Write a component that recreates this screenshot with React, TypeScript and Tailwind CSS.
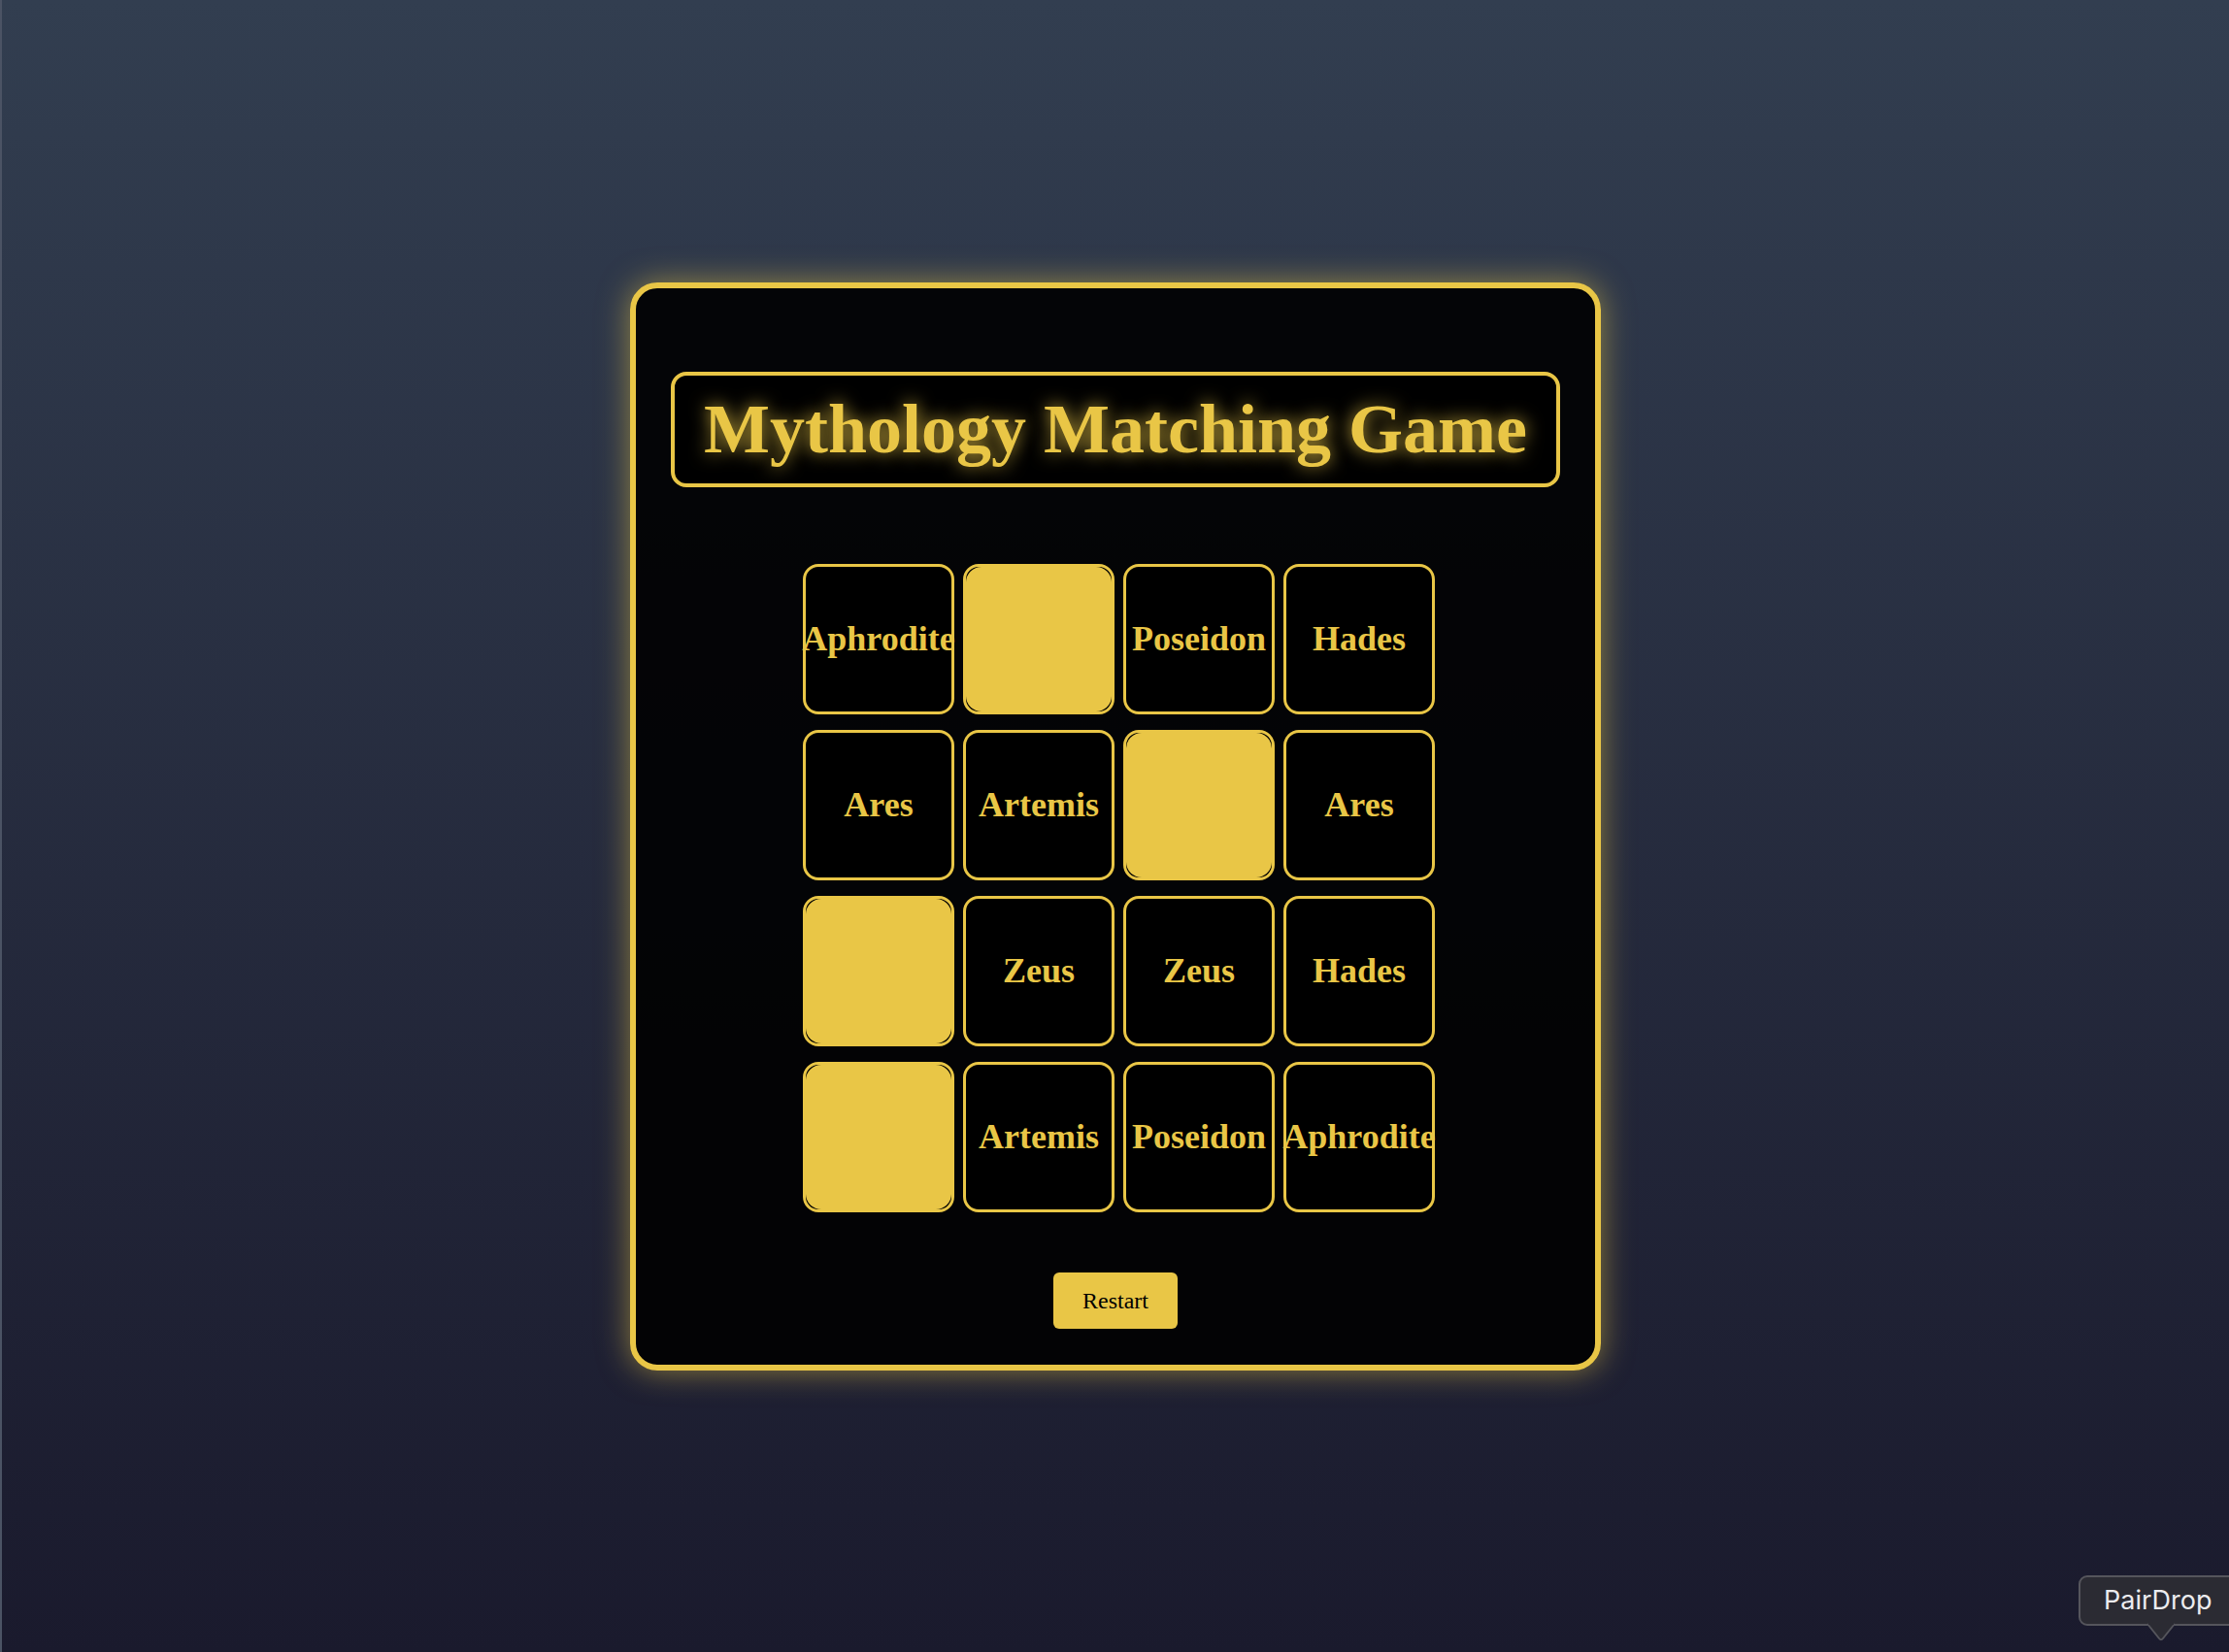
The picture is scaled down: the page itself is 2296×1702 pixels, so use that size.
import { useState } from "react";

const deck = [
  "Aphrodite", "Athena", "Poseidon", "Hades",
  "Ares", "Artemis", "Athena", "Ares",
  "Apollo", "Zeus", "Zeus", "Hades",
  "Apollo", "Artemis", "Poseidon", "Aphrodite",
];

// indices shown face down (yellow back)
const hiddenAtStart = [1, 6, 8, 12];

function Card({ name, hidden, onClick }: { name: string; hidden: boolean; onClick: () => void }) {
  return (
    <button
      onClick={onClick}
      className="w-[156px] h-[155px] rounded-[16px] border-[3px] border-[#e9c646] bg-black flex items-center justify-center relative"
    >
      {hidden ? (
        <div className="absolute inset-0 rounded-[16px] bg-[#e9c646]" />
      ) : (
        <span className="text-[36px] font-bold text-[#e9c646] whitespace-nowrap leading-none [font-family:'Liberation_Serif',serif]">
          {name}
        </span>
      )}
    </button>
  );
}

export default function App() {
  const [hidden, setHidden] = useState<number[]>(hiddenAtStart);

  return (
    <div className="w-[2296px] h-[1702px] relative overflow-hidden bg-linear-to-b from-[#323e50] to-[#1a1a2d] border-l-2 border-[#4b5364] flex items-center justify-center [font-family:'Liberation_Serif',serif]">
      {/* Game panel */}
      <div className="w-[1000px] rounded-[28px] border-[6px] border-[#e9c646] bg-black/90 px-[36px] pt-[36px] pb-[37px] shadow-[0_0_32px_rgba(233,198,70,0.55)] flex flex-col items-center">
        <div className="mt-[50px] w-full h-[119px] rounded-[16px] border-4 border-[#e9c646] bg-black flex items-center justify-center">
          <h1 className="text-[72px] font-bold leading-none text-[#e9c646] [text-shadow:0_0_18px_rgba(233,198,70,0.85)]">
            Mythology Matching Game
          </h1>
        </div>

        <div className="mt-[79px] ml-[7px] grid grid-cols-4 gap-x-[9px] gap-y-[16px]">
          {deck.map((name, i) => (
            <Card
              key={i}
              name={name}
              hidden={hidden.includes(i)}
              onClick={() =>
                setHidden((h) => (h.includes(i) ? h.filter((x) => x !== i) : [...h, i]))
              }
            />
          ))}
        </div>

        <button
          onClick={() => setHidden(hiddenAtStart)}
          className="mt-[62px] h-[58px] px-[30px] rounded-[6px] bg-[#e9c646] text-black text-[24px] leading-none"
        >
          Restart
        </button>
      </div>

      {/* PairDrop tooltip */}
      <div className="absolute left-[2139px] top-[1623px] w-[170px]">
        <div className="h-[52px] rounded-[9px] border-2 border-[#55555c] bg-[#2b2b33] flex items-center pl-[24px] text-[27px] text-[#ececef] [font-family:Inter,sans-serif]">
          PairDrop
        </div>
        <svg className="absolute left-[70px] top-[49px]" width="30" height="19" viewBox="0 0 30 19">
          <path d="M1 1 L13 16 Q15 18.5 17 16 L29 1" fill="#2b2b33" stroke="#55555c" strokeWidth="2" />
          <rect x="2" y="0" width="26" height="2" fill="#2b2b33" />
        </svg>
      </div>
    </div>
  );
}
